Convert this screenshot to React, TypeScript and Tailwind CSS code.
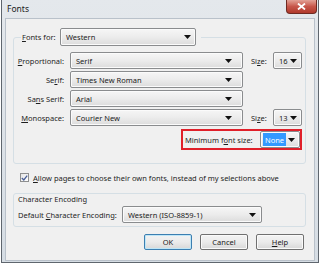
import React from "react";

const FONT = "font-['Noto_Sans','Open_Sans',sans-serif]";

function Arrow() {
  return (
    <svg width="7" height="4" viewBox="0 0 7 4" className="shrink-0">
      <path d="M0 0 H7 L3.5 4 Z" fill="#111" />
    </svg>
  );
}

function Combo({
  value,
  className,
  highlight,
  arrowPad = "pr-[4px]",
}: {
  value: string;
  className: string;
  highlight?: boolean;
  arrowPad?: string;
}) {
  return (
    <div
      className={`flex items-center border border-[#8a8c8e] rounded-[2px] bg-gradient-to-b from-[#f6f6f6] via-[#ececec] to-[#dcdcdc] shadow-[inset_0_0_0_1px_#fbfbfb] ${className}`}
    >
      {highlight ? (
        <span className="flex-1 min-w-0 pl-[2px] flex items-center">
          <span className="h-[13px] flex items-center bg-[#3399ff] text-white px-[2px] leading-[10px]">{value}</span>
        </span>
      ) : (
        <span className="flex-1 min-w-0 whitespace-nowrap pl-[5px] leading-[10px] text-[#1a1a1a]">{value}</span>
      )}
      <span className={`flex items-center ${arrowPad}`}>
        <Arrow />
      </span>
    </div>
  );
}

function Btn({ children, primary }: { children: React.ReactNode; primary?: boolean }) {
  return (
    <div
      className={`w-[48px] h-[16px] flex items-center justify-center rounded-[2px] border ${
        primary
          ? "border-[#3c7fb1] shadow-[inset_0_0_0_1px_#bfe6f7]"
          : "border-[#707070] shadow-[inset_0_0_0_1px_#fafafa]"
      } bg-gradient-to-b from-[#f3f3f3] via-[#ebebeb] to-[#d8d8d8] text-[#1a1a1a] leading-[10px]`}
    >
      {children}
    </div>
  );
}

export default function App() {
  return (
    <div className={`w-[320px] h-[265px] bg-white ${FONT} text-[7.5px] text-[#1e1e1e] overflow-hidden whitespace-nowrap`}>
      <div className="ml-[1px] w-[318px] h-[263px] border border-[#5f666e] border-t-0 bg-gradient-to-b from-[#e4e8ec] to-[#d6dde4] flex flex-col px-[3px] pb-[1px]">
        {/* title bar */}
        <div className="h-[18px] flex items-start shrink-0">
          <span className="pl-[2px] pt-[4px] text-[8.5px] leading-[10px] text-[#1b1b1b]">Fonts</span>
          <div className="flex-1" />
          <div className="mr-[-2px] w-[31px] h-[14px] rounded-b-[4px] border border-t-0 border-[#6e2a22] bg-gradient-to-b from-[#e2a196] via-[#c7564a] to-[#b0392c] flex items-center justify-center">
            <svg width="9" height="7" viewBox="0 0 9 7">
              <path d="M1 0.5 L8 6.5 M8 0.5 L1 6.5" stroke="#fff" strokeWidth="1.8" />
            </svg>
          </div>
        </div>

        {/* client area */}
        <div className="flex-1 bg-[#f0f0f0] border border-[#b9c1ca] flex flex-col px-[7px]">
          <fieldset className="mt-[9px] border border-[#d5dfe5] rounded-[3px] pt-[6px] pb-[13px] pl-[0px] pr-[3px] mr-[1px]">
            <legend className="ml-[7px] pl-[1px] pr-[5px] flex items-center">
              <span className="w-[38px] leading-[10px]">
                <u>F</u>onts for:
              </span>
              <Combo value="Western" className="w-[136px] h-[18px]" arrowPad="pr-[4px]" />
            </legend>

            <div className="grid grid-cols-[56px_173px_30px_29px] gap-y-[2px] items-center leading-[10px]">
              <span className="text-right pr-[6px]">
                <u>P</u>roportional:
              </span>
              <Combo value="Serif" className="h-[17px]" arrowPad="pr-[10px]" />
              <span className="pl-[8px]">
                Si<u>z</u>e:
              </span>
              <Combo value="16" className="h-[17px]" arrowPad="pr-[4px]" />

              <span className="text-right pr-[6px]">
                Se<u>r</u>if:
              </span>
              <Combo value="Times New Roman" className="h-[17px]" arrowPad="pr-[10px]" />
              <span />
              <span />

              <span className="text-right pr-[6px]">
                Sa<u>n</u>s Serif:
              </span>
              <Combo value="Arial" className="h-[17px]" arrowPad="pr-[10px]" />
              <span />
              <span />

              <span className="text-right pr-[6px]">
                <u>M</u>onospace:
              </span>
              <Combo value="Courier New" className="h-[17px]" arrowPad="pr-[10px]" />
              <span className="pl-[8px]">
                Si<u>z</u>e:
              </span>
              <Combo value="13" className="h-[17px]" arrowPad="pr-[4px]" />
            </div>

            <div className="flex justify-end mt-[3px]">
              <div className="w-[121px] h-[21px] border-2 border-[#e0202a] flex items-center pl-[2px] pr-[0px]">
                <span className="flex-1 leading-[10px]">
                  Minimum f<u>o</u>nt size:
                </span>
                <Combo value="None" highlight className="w-[40px] h-[17px]" arrowPad="pr-[4px]" />
              </div>
            </div>
          </fieldset>

          <div className="flex items-center mt-[9px] h-[9px] pl-[7px] gap-[4px]">
            <div className="w-[9px] h-[9px] border border-[#8e8f8f] bg-gradient-to-br from-[#e6e6e6] to-[#ffffff] flex items-center justify-center">
              <svg width="7" height="6" viewBox="0 0 7 6">
                <path d="M0.8 3 L2.8 5 L6.2 0.6" stroke="#4a5f97" strokeWidth="1.3" fill="none" />
              </svg>
            </div>
            <span className="leading-[10px]">
              <u>A</u>llow pages to choose their own fonts, instead of my selections above
            </span>
          </div>

          <div className="mt-[11px] border border-[#d5dfe5] rounded-[3px] h-[34px] mr-[1px] flex flex-col pl-[4px]">
            <span className="mt-[0px] leading-[10px]">Character Encoding</span>
            <div className="flex items-center mt-[2px]">
              <span className="w-[104px] leading-[10px]">
                Default <u>C</u>haracter Encoding:
              </span>
              <Combo value="Western (ISO-8859-1)" className="w-[140px] h-[17px]" arrowPad="pr-[5px]" />
            </div>
          </div>

          <div className="flex justify-end gap-[8px] mt-[7px] pr-[3px]">
            <Btn primary>OK</Btn>
            <Btn>Cancel</Btn>
            <Btn>
              <span>
                <u>H</u>elp
              </span>
            </Btn>
          </div>
        </div>
      </div>
    </div>
  );
}
